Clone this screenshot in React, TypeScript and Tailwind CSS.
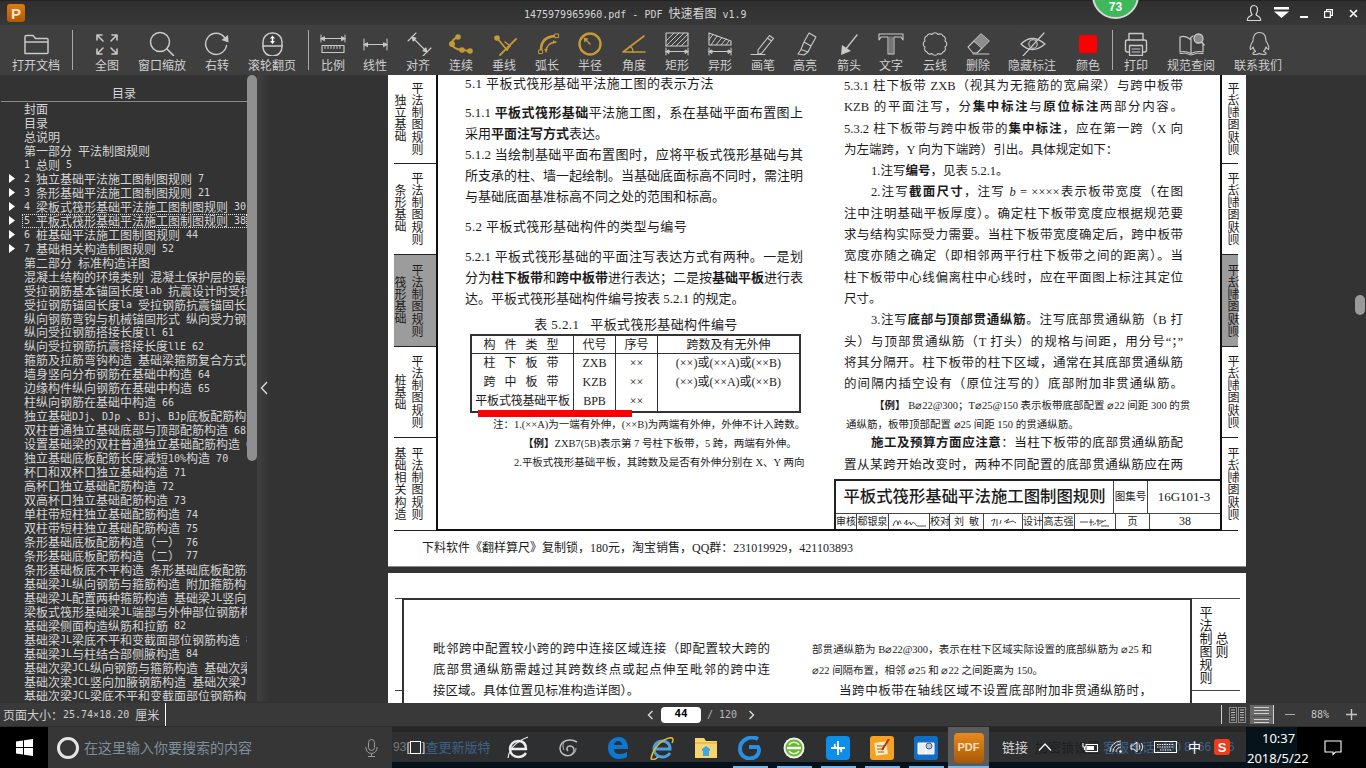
import React from "react";

const Mono = "[font-family:'DejaVu_Sans_Mono',monospace] text-[10px]";

function T({ s }: { s: string }) {
  const parts = s.split(/([\x20-\x7e×]+)/);
  return (
    <>
      {parts.map((p, i) =>
        p === "" ? null : /^[\x20-\x7e×]+$/.test(p) ? (
          <span key={i} className={`${Mono} whitespace-pre`}>{p}</span>
        ) : (
          <span key={i}>{p}</span>
        )
      )}
    </>
  );
}

const G = "#c9c9c9";
const Y = "#c49a36";

const S = ({ children }: { children: React.ReactNode }) => (
  <svg width="32" height="26" viewBox="0 0 32 26" fill="none" stroke={G} strokeWidth="1.4" strokeLinecap="round" strokeLinejoin="round">
    {children}
  </svg>
);
const Gold = ({ children }: { children: React.ReactNode }) => (
  <svg width="32" height="26" viewBox="0 0 32 26" fill="none" stroke={Y} strokeWidth="2" strokeLinecap="round" strokeLinejoin="round">
    {children}
  </svg>
);
const Dim = () => (
  <g strokeWidth="1">
    <path d="M5 18V25M27 18V25M5 21.5H27" />
    <path d="M5 21.5l3-1.6v3.2zM27 21.5l-3-1.6v3.2z" fill={G} />
  </g>
);

const tools: { label: string; w: string; icon: React.ReactNode; ml?: string }[] = [
  { label: "打开文档", w: "w-[72px]", icon: <S><path d="M5 23.5V7a1.5 1.5 0 0 1 1.5-1.5H13l2.5 3H27a1 1 0 0 1 1 1V22.5a1 1 0 0 1-1 1ZM5 12H28" strokeWidth="1.5" /></S> },
];
const group1: typeof tools = [
  { label: "全图", w: "w-[68px]", icon: <S><g strokeWidth="1.6"><path d="M6 5l6 6M6 5h5M6 5v5M26 5l-6 6M26 5h-5M26 5v5M6 24l6-6M6 24h5M6 24v-5M26 24l-6-6M26 24h-5M26 24v-5" /></g></S> },
  { label: "窗口缩放", w: "w-[42px]", icon: <S><circle cx="14" cy="12" r="9.5" strokeWidth="1.5" /><path d="M21 19l6.5 6.5" strokeWidth="1.6" /></S> },
  { label: "右转", w: "w-[68px]", icon: <S><path d="M23.5 7.5A10.5 10.5 0 1 0 25.5 15.5" strokeWidth="1.5" /><path d="M27 5l.5 7.5-7-2.5z" fill={G} stroke="none" /></S> },
  { label: "滚轮翻页", w: "w-[42px]", icon: <S><rect x="7" y="3" width="19" height="23" rx="9" strokeWidth="1.5" /><path d="M7 16H26" strokeWidth="1.5" /><path d="M16.5 5.5l2.5 3h-5zM16.5 14l2.5-3h-5z" fill="#fff" stroke="none" /><path d="M16.5 8v3.5" stroke="#fff" /></S> },
];
const group2: typeof tools = [
  { label: "比例", w: "w-[48px]", icon: <S><g strokeWidth="1"><path d="M4 5V12M28 5V12M4 8.5H28" /><path d="M4 8.5l3.5-1.8v3.6zM28 8.5l-3.5-1.8v3.6z" fill={G} /></g><rect x="5" y="15.5" width="22" height="7" strokeWidth="1.2" /><path d="M8 15.5v3M11 15.5v3M14 15.5v3M17 15.5v3M20 15.5v3M23 15.5v3" strokeWidth="1" /></S> },
  { label: "线性", w: "w-[36px]", icon: <S><g strokeWidth="1"><path d="M5 9V20M28 9V20M5 14.5H28" /><path d="M5 14.5l3.5-1.8v3.6zM28 14.5l-3.5-1.8v3.6z" fill={G} /></g></S> },
  { label: "对齐", w: "w-[50px]", icon: <S><g strokeWidth="1.1"><path d="M6 11L14 3M21 26L29 18M10 7L25 22" /><path d="M10 7l4 1.2-2.8 2.8zM25 22l-4-1.2 2.8-2.8z" fill={G} /></g></S> },
  { label: "连续", w: "w-[36px]", icon: <Gold><path d="M13 7Q6 10 7 14Q8 19 17 20L25 21" strokeWidth="2" /><circle cx="13" cy="7" r="2.8" fill={Y} stroke="none" /><circle cx="7" cy="14" r="3" fill={Y} stroke="none" /><circle cx="17" cy="20" r="2.8" fill={Y} stroke="none" /><circle cx="25" cy="21" r="2.8" fill={Y} stroke="none" /></Gold> },
  { label: "垂线", w: "w-[50px]", icon: <Gold><path d="M9 8L19 20M28 9L12 25" strokeWidth="1.8" /><circle cx="9" cy="8" r="2.8" fill={Y} stroke="none" /><path d="M17 12l5 4" strokeWidth="1.4" /><path d="M22 16l-3 4" strokeWidth="1.4" /></Gold> },
  { label: "弧长", w: "w-[36px]", icon: <Gold><path d="M10 20Q10 7 24 6" strokeWidth="2.6" /><path d="M15 22Q15 13 25 12" strokeWidth="1.3" /><path d="M25 12l-3-2v4zM15 22l-2-3h4z" fill={Y} stroke="none" /><rect x="8" y="20" width="3.6" height="3.6" fill="#3f3f3f" strokeWidth="1" /><rect x="24" y="4" width="3.6" height="3.6" fill="#3f3f3f" strokeWidth="1" /></Gold> },
  { label: "半径", w: "w-[50px]", icon: <Gold><circle cx="16" cy="14" r="10.5" strokeWidth="2.4" /><path d="M16 14L11 9" strokeWidth="1.4" /><path d="M9.5 7.5l5 1-4 4z" fill={Y} stroke="none" /></Gold> },
  { label: "角度", w: "w-[38px]", icon: <Gold><path d="M5 22L26 6M5 22H27" strokeWidth="1.6" /><path d="M15 22Q15 18 12 16" strokeWidth="1.3" /></Gold> },
  { label: "矩形", w: "w-[48px]", icon: <S><rect x="5" y="3" width="22" height="13" strokeWidth="1.1" /><path d="M5 11L13 3M5 16L18 3M10 16L23 3M15 16L27 4M20 16L27 9" strokeWidth="1" /><Dim /></S> },
  { label: "异形", w: "w-[38px]", icon: <S><path d="M5 3V15H27V11Z" strokeWidth="1.1" /><path d="M5 10L9 4.5M7 15L13 6M12 15L18 7.5M17 15L22 9M22 15L25 11" strokeWidth="1" /><Dim /></S> },
  { label: "画笔", w: "w-[48px]", icon: <S><path d="M22.5 5.5L26.5 8.5L15 23L11 24.5V20ZM20.5 8L24.5 11" strokeWidth="1.1" /><path d="M4 24.5H18" strokeWidth="1.1" /></S> },
  { label: "高亮", w: "w-[36px]", icon: <S><g strokeWidth="1.1"><path d="M20 3L27 7L22 16L15 12ZM15 12L22 16L19 22L12 19.5ZM12 19.5L19 22L15 25L9 24Z" /></g></S> },
  { label: "箭头", w: "w-[52px]", icon: <S><path d="M24 5L12 20" strokeWidth="1.3" /><path d="M8 25L9 15L18 21Z" fill={G} stroke="none" /></S> },
  { label: "文字", w: "w-[32px]", icon: <S><path d="M4 4H28V10L26 7H19V24H13V7H6L4 10Z" strokeWidth="1.1" /><path d="M15 7V24M17 7V24" strokeWidth="0.8" /></S> },
  { label: "云线", w: "w-[56px]", icon: <S><path d="M8 6A3.4 3.4 0 0 1 13 4.5A3.4 3.4 0 0 1 19 4.5A3.4 3.4 0 0 1 24 6A3.4 3.4 0 0 1 26 11A3.4 3.4 0 0 1 26 17A3.4 3.4 0 0 1 24 22A3.4 3.4 0 0 1 19 23.5A3.4 3.4 0 0 1 13 23.5A3.4 3.4 0 0 1 8 22A3.4 3.4 0 0 1 6 17A3.4 3.4 0 0 1 6 11A3.4 3.4 0 0 1 8 6Z" strokeWidth="1.1" /></S> },
  { label: "删除", w: "w-[30px]", icon: <S><path d="M6 17L19 4L27 11L15 23H11Z" strokeWidth="1.1" /><path d="M12 11L20 18" strokeWidth="1.1" /><path d="M19 4L27 11L20 18L12 11Z" fill="#8d8d8d" stroke="none" /><path d="M11 24H27" strokeWidth="1.1" /></S> },
  { label: "隐藏标注", w: "w-[78px]", icon: <S><path d="M5 14Q16 3 29 14Q16 25 5 14Z" strokeWidth="1.3" /><circle cx="17" cy="14" r="4.2" strokeWidth="1.1" /><path d="M7 26L28 3" strokeWidth="1.2" /></S> },
  { label: "颜色", w: "w-[34px]", icon: <div className="w-[18px] h-[18px] mb-[3px] rounded-[2px] bg-[#ff0000]" /> },
];
const group3: typeof tools = [
  { label: "打印", w: "w-[46px]", icon: <S><path d="M9 10V3.5H23V10" strokeWidth="1.4" /><rect x="5.5" y="10" width="21" height="12" rx="2" strokeWidth="1.4" /><path d="M9.5 15.5H22.5V25.5H9.5Z" fill="#3f3f3f" strokeWidth="1.3" /><path d="M12 19H20M12 22H20" strokeWidth="1" /></S> },
  { label: "规范查阅", w: "w-[64px]", icon: <S><path d="M15 9Q10 5 5 7V22Q10 20.5 16 23.5Q22 20.5 28 22V15" strokeWidth="1.2" /><path d="M16 9V23M15 9Q16 7 18 6" strokeWidth="1.2" /><circle cx="23.5" cy="8.5" r="4.5" strokeWidth="1.3" fill="#8a8a8a" /><path d="M26.5 12L29 15" strokeWidth="1.6" /><path d="M5 23.5Q10 22 16 25Q22 22 28 23.5" strokeWidth="1" /></S> },
  { label: "联系我们", w: "w-[70px]", icon: <S><path d="M17.5 2.5C12.5 2.5 11 6.5 11 11C9 14 7.5 17 8.5 19.5C9.5 19.5 10.5 18 11 17C11.5 19 12.5 20.5 13.5 21.5C11.5 22 10.5 23 11 24C12 25 15.5 24.5 17.5 23.5C19.5 24.5 23 25 24 24C24.5 23 23.5 22 21.5 21.5C22.5 20.5 23.5 19 24 17C24.5 18 25.5 19.5 26.5 19.5C27.5 17 26 14 24 11C24 6.5 22.5 2.5 17.5 2.5Z" strokeWidth="1.1" /></S> },
];

function Tool({ t }: { t: (typeof tools)[number] }) {
  return (
    <div className={`${t.w} shrink-0 h-full flex flex-col items-center justify-start`}>
      <div className="h-[26px] mt-[5px] flex items-end justify-center">{t.icon}</div>
      <div className="mt-[1px] text-[12px] leading-[16px] text-[#cfcfcf] whitespace-nowrap">{t.label}</div>
    </div>
  );
}
const Sep = () => <div className="w-px h-[40px] mt-[5px] bg-[#a8a8a8] shrink-0" />;

function TitleBar() {
  return (
    <div className="h-[25px] flex items-center bg-[linear-gradient(#2f2f2f,#383838)] relative shrink-0 border-t border-[#222]">
      <div className="ml-[7px] w-[18px] h-[18px] rounded-[3px] bg-[linear-gradient(#e07a12,#b05a08)] flex items-center justify-center text-[#f8e4c8] text-[15px] font-bold leading-none [font-family:'Liberation_Sans',sans-serif]">P</div>
      <div className="ml-[499px] text-[12px] text-[#d4d4d4] whitespace-nowrap"><T s="1475979965960.pdf - PDF 快速看图 v1.9" /></div>
      <div className="absolute left-[1092px] top-[-29px] w-[47px] h-[47px] rounded-full bg-[#3fb85c] border-2 border-[#d8d8d8] flex items-end justify-center pb-[3px] text-white text-[12px] font-bold leading-[14px] [font-family:'Liberation_Sans',sans-serif]">73</div>
      <div className="ml-auto flex items-center h-full">
        <svg width="16" height="18" viewBox="0 0 16 18" fill="none" stroke="#d8d8d8" strokeWidth="1.2" className="mr-[11px]">
          <path d="M8 1.5C5.5 1.5 4.5 3.5 4.5 6C4.5 8 5.5 9.5 6 10.5C5.5 12 2 12.5 1.5 15V16.5H14.5V15C14 12.5 10.5 12 10 10.5C10.5 9.5 11.5 8 11.5 6C11.5 3.5 10.5 1.5 8 1.5Z" />
        </svg>
        <svg width="17" height="12" viewBox="0 0 17 12" fill="#fff" className="mr-[10px]">
          <rect x="1" y="0" width="15" height="2.5" /><path d="M1 4.5H16L8.5 11Z" />
        </svg>
        <div className="w-[8px] h-[2px] bg-white mr-[16px] mt-[8px]" />
        <svg width="9" height="9" viewBox="0 0 9 9" fill="none" stroke="#fff" strokeWidth="1.2" className="mr-[16px]">
          <rect x="0.6" y="2.6" width="5.8" height="5.8" /><path d="M2.6 2.6V0.6H8.4V6.4H6.4" />
        </svg>
        <svg width="9" height="9" viewBox="0 0 9 9" stroke="#fff" strokeWidth="1.6" className="mr-[8px]">
          <path d="M1 1L8 8M8 1L1 8" />
        </svg>
      </div>
    </div>
  );
}

function Toolbar() {
  return (
    <div className="h-[50px] bg-[#3f3f3f] flex shrink-0">
      {tools.map((t) => <Tool key={t.label} t={t} />)}
      <Sep />
      {group1.map((t) => <Tool key={t.label} t={t} />)}
      <div className="w-[15px] shrink-0" />
      <Sep />
      {group2.map((t) => <Tool key={t.label} t={t} />)}
      <div className="w-[7px] shrink-0" />
      <Sep />
      {group3.map((t) => <Tool key={t.label} t={t} />)}
    </div>
  );
}

const toc: { s: string; a?: boolean; sel?: boolean }[] = [
  { s: "封面" }, { s: "目录" }, { s: "总说明" }, { s: "第一部分 平法制图规则" }, { s: "1 总则 5" },
  { s: "2 独立基础平法施工图制图规则 7", a: true },
  { s: "3 条形基础平法施工图制图规则 21", a: true },
  { s: "4 梁板式筏形基础平法施工图制图规则 30", a: true },
  { s: "5 平板式筏形基础平法施工图制图规则 38", a: true, sel: true },
  { s: "6 桩基础平法施工图制图规则 44", a: true },
  { s: "7 基础相关构造制图规则 52", a: true },
  { s: "第二部分 标准构造详图" },
  { s: "混凝土结构的环境类别 混凝土保护层的最小厚度 54" },
  { s: "受拉钢筋基本锚固长度lab 抗震设计时受拉钢筋基本锚固长度" },
  { s: "受拉钢筋锚固长度la 受拉钢筋抗震锚固长度 59" },
  { s: "纵向钢筋弯钩与机械锚固形式 纵向受力钢筋搭接" },
  { s: "纵向受拉钢筋搭接长度ll 61" },
  { s: "纵向受拉钢筋抗震搭接长度llE 62" },
  { s: "箍筋及拉筋弯钩构造 基础梁箍筋复合方式 63" },
  { s: "墙身竖向分布钢筋在基础中构造 64" },
  { s: "边缘构件纵向钢筋在基础中构造 65" },
  { s: "柱纵向钢筋在基础中构造 66" },
  { s: "独立基础DJj、DJp 、BJj、BJp底板配筋构造 67" },
  { s: "双柱普通独立基础底部与顶部配筋构造 68" },
  { s: "设置基础梁的双柱普通独立基础配筋构造 69" },
  { s: "独立基础底板配筋长度减短10%构造 70" },
  { s: "杯口和双杯口独立基础构造 71" },
  { s: "高杯口独立基础配筋构造 72" },
  { s: "双高杯口独立基础配筋构造 73" },
  { s: "单柱带短柱独立基础配筋构造 74" },
  { s: "双柱带短柱独立基础配筋构造 75" },
  { s: "条形基础底板配筋构造（一） 76" },
  { s: "条形基础底板配筋构造（二） 77" },
  { s: "条形基础板底不平构造 条形基础底板配筋构造" },
  { s: "基础梁JL纵向钢筋与箍筋构造 附加箍筋构造" },
  { s: "基础梁JL配置两种箍筋构造 基础梁JL竖向加腋" },
  { s: "梁板式筏形基础梁JL端部与外伸部位钢筋构造" },
  { s: "基础梁侧面构造纵筋和拉筋 82" },
  { s: "基础梁JL梁底不平和变截面部位钢筋构造 83" },
  { s: "基础梁JL与柱结合部侧腋构造 84" },
  { s: "基础次梁JCL纵向钢筋与箍筋构造 基础次梁" },
  { s: "基础次梁JCL竖向加腋钢筋构造 基础次梁JCL" },
  { s: "基础次梁JCL梁底不平和变截面部位钢筋构造" },
];

function Sidebar() {
  return (
    <div className="w-[247px] shrink-0 flex flex-col pb-[2px] overflow-hidden text-[12px] text-[#d6d6d6]">
      <div className="h-[27px] ml-[1px] shrink-0 border-b border-[#8a8a8a] flex items-end justify-center leading-[16px]">目录</div>
      <div className="flex-1 overflow-hidden">
        {toc.map((r, i) => (
          <div key={i} className="h-[13.97px] flex items-center whitespace-nowrap">
            <div className="w-[22px] shrink-0 pl-[9px] flex items-center">
              {r.a && (
                <svg width="6" height="9" viewBox="0 0 6 9" fill="#fff"><path d="M0 0L6 4.5L0 9Z" /></svg>
              )}
            </div>
            <div className={r.sel ? "flex-1 h-[13.97px] pl-[1px] flex items-center overflow-hidden border border-dotted border-[#e0e0e0]" : "flex-1 pl-[2px] flex items-center overflow-hidden"}>
              <T s={r.s} />
            </div>
          </div>
        ))}
      </div>
    </div>
  );
}

const Just = "[text-align:justify] [text-align-last:justify] whitespace-nowrap";

function V({ s }: { s: string }) {
  return <div className="[writing-mode:vertical-rl] tracking-[0.3px] text-[12px] leading-[12px] whitespace-nowrap">{s}</div>;
}

const leftTabs = [
  { h: "h-[89px]", l: "独立基础", bg: "" },
  { h: "h-[91px]", l: "条形基础", bg: "" },
  { h: "h-[92px]", l: "筏形基础", bg: "bg-[#9c9c9c]" },
  { h: "h-[91px]", l: "桩基础", bg: "" },
  { h: "h-[93px]", l: "基础相关构造", bg: "" },
];

function LeftTabs() {
  return (
    <div className="w-[42px] ml-[6px] flex flex-col shrink-0">
      {leftTabs.map((t) => (
        <div key={t.l} className={`${t.h} ${t.bg} border-b border-[#222] flex items-center justify-center gap-[5px] pr-[15px]`}>
          <V s={t.l} />
          <V s="平法制图规则" />
        </div>
      ))}
    </div>
  );
}

function RightTabs() {
  return (
    <div className="w-[24px] flex flex-col shrink-0">
      {[
        "h-[89px]",
        "h-[91px]",
        "h-[92px] bg-[#9c9c9c]",
        "h-[91px]",
        "h-[93px]",
      ].map((h, i) => (
        <div key={i} className={`${h} w-[16px] border-b border-[#222] flex items-center pl-[7px]`}>
          <div className="-scale-x-100"><V s="平法制图规则" /></div>
        </div>
      ))}
    </div>
  );
}

const leftCol = (
  <div className="w-[396px] shrink-0 pl-[27px] pr-[31px] text-[13px] leading-[21px] flex flex-col">
    <div className="h-[18px] leading-[18px] whitespace-nowrap tracking-[0.4px]">5.1 平板式筏形基础平法施工图的表示方法</div>
    <div className={`mt-[9px] ${Just}`}>5.1.1 <b className="font-bold">平板式筏形基础</b>平法施工图，系在基础平面布置图上</div>
    <div>采用<b className="font-bold">平面注写方式</b>表达。</div>
    <div className={Just}>5.1.2 当绘制基础平面布置图时，应将平板式筏形基础与其</div>
    <div className={Just}>所支承的柱、墙一起绘制。当基础底面标高不同时，需注明</div>
    <div>与基础底面基准标高不同之处的范围和标高。</div>
    <div className="mt-[9px] whitespace-nowrap tracking-[0.4px]">5.2 平板式筏形基础构件的类型与编号</div>
    <div className={`mt-[9px] ${Just}`}>5.2.1 平板式筏形基础的平面注写表达方式有两种。一是划</div>
    <div className={Just}>分为<b className="font-bold">柱下板带</b>和<b className="font-bold">跨中板带</b>进行表达；二是按<b className="font-bold">基础平板</b>进行表</div>
    <div className="whitespace-nowrap">达。平板式筏形基础构件编号按表 5.2.1 的规定。</div>
    <div className="mt-[6px] h-[19px] leading-[19px] text-[13px] tracking-[0.4px] text-center pl-[4px] whitespace-pre">表 5.2.1   平板式筏形基础构件编号</div>
    <div className="ml-[5px] w-[331px] border-2 border-[#333] text-[12px] text-center relative">
      <div className="grid grid-cols-[102px_42px_42px_1fr] grid-rows-[18px_19px_19px_19px] leading-[19px]">
        <div className="border-b border-r border-[#333] tracking-[3px] whitespace-pre">构 件 类 型</div>
        <div className="border-b border-r border-[#333]">代号</div>
        <div className="border-b border-r border-[#333]">序号</div>
        <div className="border-b border-[#333]">跨数及有无外伸</div>
        <div className="border-r border-[#333] tracking-[3px] whitespace-pre">柱 下 板 带</div>
        <div className="border-r border-[#333]">ZXB</div>
        <div className="border-r border-[#333]">××</div>
        <div className="whitespace-nowrap">(××)或(××A)或(××B)</div>
        <div className="border-r border-[#333] tracking-[3px] whitespace-pre">跨 中 板 带</div>
        <div className="border-r border-[#333]">KZB</div>
        <div className="border-r border-[#333]">××</div>
        <div className="whitespace-nowrap">(××)或(××A)或(××B)</div>
        <div className="border-r border-[#333] whitespace-nowrap tracking-[-0.2px]">平板式筏基础平板</div>
        <div className="border-r border-[#333]">BPB</div>
        <div className="border-r border-[#333]">××</div>
        <div />
      </div>
      <div className="absolute left-[6px] top-[74px] w-[154px] h-[7px] bg-[#ff0000]" />
    </div>
    <div className="text-[10.5px] leading-[19px] mt-[2px]">
      <div className={`ml-[28px] w-[306px] ${Just}`}>注：1.(××A)为一端有外伸，(××B)为两端有外伸，外伸不计入跨数。</div>
      <div className={`ml-[58px] w-[262px] ${Just}`}><b className="font-bold">【例】</b>ZXB7(5B)表示第 7 号柱下板带，5 跨，两端有外伸。</div>
      <div className={`ml-[49px] w-[289px] ${Just}`}>2.平板式筏形基础平板，其跨数及是否有外伸分别在 X、Y 两向</div>
    </div>
  </div>
);

const rightCol = (
  <div className="w-[386px] min-w-0 shrink-0 flex flex-col">
    <div className="pl-[10px] pr-[37px] pt-[1px] text-[12.5px] leading-[21.3px]">
      <div className={Just}>5.3.1 柱下板带 ZXB（视其为无箍筋的宽扁梁）与跨中板带</div>
      <div className={Just}>KZB 的平面注写，分<b className="font-bold">集中标注</b>与<b className="font-bold">原位标注</b>两部分内容。</div>
      <div className={Just}>5.3.2 柱下板带与跨中板带的<b className="font-bold">集中标注</b>，应在第一跨（X 向</div>
      <div className="whitespace-nowrap">为左端跨，Y 向为下端跨）引出。具体规定如下：</div>
      <div className="pl-[27px] whitespace-nowrap">1.注写<b className="font-bold">编号</b>，见表 5.2.1。</div>
      <div className={`pl-[27px] ${Just}`}>2.注写<b className="font-bold">截面尺寸</b>，注写 <i>b</i> = ××××表示板带宽度（在图</div>
      <div className={Just}>注中注明基础平板厚度）。确定柱下板带宽度应根据规范要</div>
      <div className={Just}>求与结构实际受力需要。当柱下板带宽度确定后，跨中板带</div>
      <div className={Just}>宽度亦随之确定（即相邻两平行柱下板带之间的距离）。当</div>
      <div className={Just}>柱下板带中心线偏离柱中心线时，应在平面图上标注其定位</div>
      <div>尺寸。</div>
      <div className={`pl-[27px] ${Just}`}>3.注写<b className="font-bold">底部与顶部贯通纵筋</b>。注写底部贯通纵筋（B 打</div>
      <div className={Just}>头）与顶部贯通纵筋（T 打头）的规格与间距，用分号“；”</div>
      <div className={Just}>将其分隔开。柱下板带的柱下区域，通常在其底部贯通纵筋</div>
      <div className={Just}>的间隔内插空设有（原位注写的）底部附加非贯通纵筋。</div>
      <div className="text-[10.5px] leading-[19px] mt-[1px]">
        <div className={`pl-[30px] pr-[2px] ${Just}`}><b className="font-bold">【例】</b> B⌀22@300；T⌀25@150 表示板带底部配置 ⌀22 间距 300 的贯</div>
        <div className="pl-[2px] whitespace-nowrap">通纵筋，板带顶部配置 ⌀25 间距 150 的贯通纵筋。</div>
      </div>
      <div className={`pl-[27px] mt-[-1px] ${Just}`}><b className="font-bold">施工及预算方面应注意</b>：当柱下板带的底部贯通纵筋配</div>
      <div className={Just}>置从某跨开始改变时，两种不同配置的底部贯通纵筋应在两</div>
    </div>
    <div className="mt-auto h-[50px] border-l-2 border-t-2 border-[#222] flex-col flex">
      <div className="flex h-[32px]">
        <div className="w-[278px] text-[16.4px] leading-[32px] font-medium text-center whitespace-nowrap border-r border-[#444]">平板式筏形基础平法施工图制图规则</div>
        <div className="w-[34px] text-[10.5px] leading-[32px] text-center border-r border-[#444]">图集号</div>
        <div className="flex-1 text-[13px] leading-[32px] text-center">16G101-3</div>
      </div>
      <div className="flex flex-1 border-t border-[#444] text-[10px] leading-[15px] whitespace-nowrap text-center">
        <div className="w-[21px] border-r border-[#444]">审核</div>
        <div className="w-[32px] border-r border-[#444]">郗银泉</div>
        <div className="w-[41px] border-r border-[#444] flex items-center justify-center">
          <svg width="36" height="12" viewBox="0 0 36 12" fill="none" stroke="#222" strokeWidth="0.8"><path d="M2 10C4 4 6 2 7 9C8 4 9 3 10 8M13 8L16 4L15 9L19 6L20 9C23 3 24 9 26 10H35" /></svg>
        </div>
        <div className="w-[20px] border-r border-[#444]">校对</div>
        <div className="w-[34px] border-r border-[#444] whitespace-pre">刘  敏</div>
        <div className="w-[39px] border-r border-[#444] flex items-center justify-center">
          <svg width="28" height="12" viewBox="0 0 28 12" fill="none" stroke="#222" strokeWidth="0.8"><path d="M2 5L6 3L4 10M8 3V10M12 4L11 8M15 6L20 3L17 7L24 5L27 7" /></svg>
        </div>
        <div className="w-[20px] border-r border-[#444]">设计</div>
        <div className="w-[32px] border-r border-[#444]">高志强</div>
        <div className="w-[41px] border-r border-[#444] flex items-center justify-center">
          <svg width="32" height="12" viewBox="0 0 32 12" fill="none" stroke="#222" strokeWidth="0.8"><path d="M1 6H9M12 3V10M10 6H15M14 9L17 7M19 3V10M17 5H24M20 8L27 4M22 10H30" /></svg>
        </div>
        <div className="w-[34px] border-r border-[#444]">页</div>
        <div className="flex-1 text-[12px]">38</div>
      </div>
    </div>
  </div>
);

function Page1() {
  return (
    <div className="h-[492px] shrink-0 bg-white border-b border-[#8c8c8c] flex flex-col overflow-hidden">
      <div className="h-[456px] flex shrink-0">
        <LeftTabs />
        <div className="w-[786px] shrink-0 border-l-2 border-r-2 border-b-2 border-[#111] flex">
          {leftCol}
          {rightCol}
        </div>
        <RightTabs />
      </div>
      <div className="flex-1 pl-[34px] flex items-start pt-[9px]">
        <div className={`w-[416px] text-[12px] leading-[16px] ${Just}`}>下料软件《翻样算尺》复制锁，180元，淘宝销售，QQ群：231019929，421103893</div>
      </div>
    </div>
  );
}

function Page2() {
  return (
    <div className="flex-1 mt-[6px] bg-white pt-[25px] pl-[7px] flex overflow-hidden">
      <div className="w-[7px] h-[93px] border-t border-b border-[#444] shrink-0" />
      <div className="w-[790px] shrink-0 border-t-2 border-l-2 border-r-2 border-[#333] flex text-[12.5px] leading-[21px]">
        <div className="ml-[29px] w-[337px] pt-[39px] shrink-0">
          <div className={Just}>毗邻跨中配置较小跨的跨中连接区域连接（即配置较大跨的</div>
          <div className={Just}>底部贯通纵筋需越过其跨数终点或起点伸至毗邻的跨中连</div>
          <div className="whitespace-nowrap">接区域。具体位置见标准构造详图）。</div>
        </div>
        <div className="ml-[42px] w-[340px] pt-[39px] shrink-0">
          <div className={`text-[10.5px] ${Just}`}>部贯通纵筋为 B⌀22@300，表示在柱下区域实际设置的底部纵筋为 ⌀25 和</div>
          <div className="text-[10.5px] whitespace-nowrap">⌀22 间隔布置，相邻 ⌀25 和 ⌀22 之间距离为 150。</div>
          <div className={`pl-[27px] ${Just}`}>当跨中板带在轴线区域不设置底部附加非贯通纵筋时，</div>
        </div>
      </div>
      <div className="w-[48px] h-[93px] border-t border-b border-[#444] flex justify-center items-center gap-[3px] shrink-0 pr-[6px] text-[13px] leading-[13px]">
        <div className="[writing-mode:vertical-rl] whitespace-nowrap">平法制图规则</div>
        <div className="[writing-mode:vertical-rl] whitespace-nowrap">总则</div>
      </div>
    </div>
  );
}

function Main() {
  return (
    <div className="h-[628px] flex bg-[#333] shrink-0">
      <Sidebar />
      <div className="w-[10px] shrink-0">
        <div className="h-[386px] bg-[#8f8f8f] rounded-full" />
      </div>
      <div className="w-[13px] shrink-0 mb-[2px] bg-[linear-gradient(90deg,#404040,#333)] flex items-center justify-center">
        <svg width="8" height="14" viewBox="0 0 8 14" fill="none" stroke="#d8d8d8" strokeWidth="1.4"><path d="M7 1L1.5 7L7 13" /></svg>
      </div>
      <div className="w-[118px] shrink-0" />
      <div className="w-[858px] shrink-0 flex flex-col text-[#1c1c1c] [font-family:'Liberation_Serif','Noto_Sans_CJK_SC',serif] pb-0">
        <Page1 />
        <Page2 />
      </div>
      <div className="flex-1 flex justify-end pt-[220px] pr-[1px]">
        <div className="w-[10px] h-[20px] rounded-[5px] bg-[#9a9a9a]" />
      </div>
    </div>
  );
}

function StatusBar() {
  return (
    <div className="h-[24px] bg-[#393939] flex items-center shrink-0 text-[12px] text-[#cfcfcf] border-b border-[#2b2b2b]">
      <div className="w-[166px] pl-[3px] whitespace-nowrap shrink-0 border-r border-white h-full flex items-center"><T s="页面大小：25.74×18.20 厘米" /></div>
      <div className="ml-[478px] w-[12px] flex justify-center shrink-0">
        <svg width="7" height="10" viewBox="0 0 7 10" fill="none" stroke="#d8d8d8" strokeWidth="1.4"><path d="M5.5 1L1.5 5L5.5 9" /></svg>
      </div>
      <div className="ml-[5px] w-[40px] h-[16px] bg-white rounded-[4px] flex items-center justify-center text-black [font-family:'DejaVu_Sans_Mono',monospace] text-[11px] font-bold shrink-0">44</div>
      <div className={`ml-[6px] whitespace-pre text-[#b8b8b8] ${Mono} shrink-0`}>/ 120</div>
      <div className="ml-[8px] w-[12px] flex justify-center shrink-0">
        <svg width="7" height="10" viewBox="0 0 7 10" fill="none" stroke="#d8d8d8" strokeWidth="1.4"><path d="M1.5 1L5.5 5L1.5 9" /></svg>
      </div>
      <div className="ml-auto flex items-center h-full">
        <div className="w-px h-[19px] bg-[#cfcfcf]" />
        <svg width="17" height="16" viewBox="0 0 17 16" fill="none" stroke="#8a8a8a" strokeWidth="1" className="ml-[7px]">
          <rect x="0.5" y="0.5" width="7" height="15" /><rect x="9.5" y="0.5" width="7" height="15" />
          <path d="M2 3H6M2 5.5H6M2 8H6M2 10.5H6M2 13H6M11 3H15M11 5.5H15M11 8H15M11 10.5H15M11 13H15" stroke="#bcbcbc" />
        </svg>
        <div className="ml-[4px] w-[23px] h-[19px] bg-[#686868] flex flex-col gap-[2px] items-center justify-center">
          <div className="w-[15px] h-[1px] bg-[#cfcfcf]" /><div className="w-[15px] h-[1px] bg-[#cfcfcf]" /><div className="w-[15px] h-[1px] bg-[#cfcfcf]" />
          <div className="w-[21px] h-[1px] bg-[#4c4c4c]" />
          <div className="w-[15px] h-[1px] bg-[#cfcfcf]" /><div className="w-[15px] h-[1px] bg-[#cfcfcf]" />
        </div>
        <div className="w-px h-[19px] bg-[#cfcfcf]" />
        <div className="ml-[11px] w-[10px] h-[1.5px] bg-[#a8a8a8]" />
        <div className={`ml-[16px] ${Mono} text-[#c8c8c8]`}>88%</div>
        <svg width="11" height="11" viewBox="0 0 11 11" stroke="#c8c8c8" strokeWidth="1.4" className="ml-[17px] mr-[9px]"><path d="M5.5 0V11M0 5.5H11" /></svg>
      </div>
    </div>
  );
}

const Cell = ({ w, bar, children }: { w: string; bar?: boolean; children: React.ReactNode }) => (
  <div className={`${w} shrink-0 h-full flex items-center justify-center pt-[6px] pb-[6px] relative`}>
    {children}
    {bar && <div className="absolute bottom-0 left-[4.5px] right-[4.5px] h-[2px] bg-[#76b9ed]" />}
  </div>
);

function Taskbar() {
  const ghost = "[font-family:'Noto_Sans_CJK_SC',sans-serif]";
  return (
    <div className="h-[41px] flex shrink-0 bg-[linear-gradient(#262626_0,#262626_5px,#2e2f31_5px,#2e2f31_35px,#04111a_35px)] overflow-hidden">
      <div className="w-[48px] bg-black flex items-center justify-center shrink-0">
        <svg width="17" height="17" viewBox="0 0 17 17" fill="#fff"><path d="M0 2.4L7 1.4V8H0ZM8 1.3L17 0V8H8ZM0 9H7V15.6L0 14.6ZM8 9H17V17L8 15.7Z" /></svg>
      </div>
      <div className="w-[344px] bg-[#363636] flex items-center shrink-0 pl-[9px]">
        <div className="w-[22px] h-[22px] rounded-full border-[3px] border-[#e6e6e6]" />
        <div className={`ml-[5px] text-[14px] text-[#7d8f9c] whitespace-nowrap ${ghost}`}>在这里输入你要搜索的内容</div>
        <svg width="13" height="18" viewBox="0 0 13 18" fill="none" stroke="#9a9a9a" strokeWidth="1" className="ml-auto mr-[14px]">
          <rect x="3.5" y="0.5" width="6" height="11" rx="3" /><path d="M1 8V9A5.5 5.5 0 0 0 12 9V8M6.5 14.5V17.5M3 17.5H10" />
        </svg>
      </div>
      <div className="w-[104px] shrink-0 flex items-center pl-[1px] pb-[1px] text-[13px] text-[#3f6188] whitespace-nowrap overflow-visible">
        <span className="text-[#777] [font-family:'Liberation_Sans',sans-serif] text-[12px]">93</span>
        <span className="text-white text-[12px]">[</span>
        <span className="w-[11px] h-[13px] border border-white shrink-0" />
        <span className="text-white text-[12px]">]</span>
        <span className={ghost}>查更新版特</span>
      </div>
      <Cell w="w-[44px]">
        <svg width="22" height="24" viewBox="0 0 22 24" fill="none" stroke="#eee" strokeWidth="2.4"><path d="M4 13H19C19 7 15 5 11 5C6 5 3 9 3 13C3 18 7 21 11 21C14 21 17 20 19 17" /><path d="M1 22C2 14 8 6 21 1" strokeWidth="1.2" /></svg>
      </Cell>
      <Cell w="w-[56px]">
        <svg width="20" height="20" viewBox="0 0 20 20" fill="none" stroke="#bdbdbd" strokeWidth="1.5"><path d="M19 4C12 0 3 2 2 10C2 16 8 19 13 17C18 14 16 8 12 8C9 8 8 11 10 13" /><path d="M7 3C4 6 5 10 6 12M18 10C18 14 16 16 13 17" strokeWidth="1" /></svg>
      </Cell>
      <Cell w="w-[44px]">
        <svg width="22" height="22" viewBox="0 0 22 22" fill="#0b78d4"><path d="M1 11C1 4 6 0 12 0C18 0 21 5 21 12H7C7 16 10 17 13 17C16 17 18 16 20 15V20C18 21 15 22 12 22C5 22 1 17 1 11ZM7 8H15C15 5 13 4 11 4C9 4 7 6 7 8Z" /></svg>
      </Cell>
      <Cell w="w-[44px]">
        <svg width="24" height="24" viewBox="0 0 24 24" fill="none"><path d="M4 13H19C19 7 15 5 11 5C6 5 3 9 3 13C3 18 7 21 11 21C14 21 17 20 19 17" stroke="#4a9fe0" strokeWidth="3" transform="translate(1 0)" /><path d="M1 23C2 16 8 5 19 2C23 1 24 3 22 7" stroke="#e2b92c" strokeWidth="1.5" /><path d="M1 23C3 24 6 23 8 21" stroke="#e2b92c" strokeWidth="1.5" /></svg>
      </Cell>
      <Cell w="w-[44px]">
        <svg width="22" height="20" viewBox="0 0 22 20"><path d="M0 0H9L11 3H22V20H0Z" fill="#f6d570" /><path d="M0 4H22V6H0Z" fill="#e8c050" /><path d="M7 13H15V11L11 8L7 11Z M8 13H14V18H8Z" fill="#38a8e8" /></svg>
      </Cell>
      <Cell w="w-[44px]" bar>
        <svg width="24" height="24" viewBox="0 0 24 24" fill="none"><path d="M20 3C12 -1 2 4 2 13C2 20 9 24 15 22C21 20 22 14 20 11H11" stroke="#2a8fe0" strokeWidth="4" /></svg>
      </Cell>
      <Cell w="w-[44px]" bar>
        <svg width="22" height="22" viewBox="0 0 22 22"><circle cx="11" cy="11" r="10.5" fill="#f0f0f0" /><circle cx="11" cy="11" r="8.5" fill="#66b82c" /><path d="M4 11H18" stroke="#fff" strokeWidth="2.5" /><path d="M6 8A6 6 0 0 1 16 8M6 14A6 6 0 0 0 16 14" stroke="#e8f4d8" strokeWidth="1.6" fill="none" /></svg>
      </Cell>
      <Cell w="w-[44px]" bar>
        <div className="w-[24px] h-[24px] rounded-[4px] bg-[#0d8ee9] flex items-center justify-center">
          <svg width="16" height="16" viewBox="0 0 16 16" fill="none" stroke="#fff" strokeWidth="1.8"><path d="M8 1V15M1 8H15" /><path d="M8 8C5 8 4 6 5 4M8 8C11 8 12 10 11 12" /></svg>
        </div>
      </Cell>
      <Cell w="w-[44px]" bar>
        <div className="w-[24px] h-[24px] rounded-[3px] bg-[#f3a321] flex items-center justify-center">
          <svg width="18" height="18" viewBox="0 0 18 18" fill="none"><rect x="2" y="3" width="12" height="13" fill="#fde9c0" transform="rotate(-8 8 9)" /><path d="M4 7H11M4 10H11M5 13H11" stroke="#a45a10" strokeWidth="1" /><path d="M16 0L9 11" stroke="#b02a10" strokeWidth="1.8" /></svg>
        </div>
      </Cell>
      <Cell w="w-[44px]" bar>
        <div className="w-[24px] h-[24px] rounded-[3px] bg-[#0f6fc6] flex items-center justify-center">
          <svg width="18" height="16" viewBox="0 0 18 16" fill="none"><path d="M1 3H9V14H1ZM9 3H17V14H9Z" fill="#e8eef6" stroke="#fff" /><circle cx="12" cy="6" r="3" fill="#a8cce8" stroke="#555" /></svg>
        </div>
      </Cell>
      <div className="w-[41px] shrink-0 bg-[#5b5b5b] flex items-center justify-center relative">
        <div className="w-[30px] h-[30px] rounded-[4px] bg-[linear-gradient(#e88a1c,#a85808)] flex items-center justify-center text-[#fde0b8] text-[11px] font-bold [font-family:'Liberation_Sans',sans-serif]">PDF</div>
        <div className="absolute bottom-0 left-0 right-0 h-[2px] bg-[#76b9ed]" />
      </div>
      <div className="flex-1 relative flex items-center text-[13px] whitespace-nowrap pb-[1px]">
        <span className={`absolute left-[46px] text-[#1e1e1e] ${ghost}`}>加密锁设置</span>
        <span className={`absolute left-[114px] text-[#3f6188] ${ghost}`}>客服电话：</span>
        <span className="absolute left-[172px] text-[#3f6188] text-[12px] [font-family:'Liberation_Sans',sans-serif]">400 8366 716</span>
        <span className={`ml-[13px] text-[#d8d8d8] ${ghost}`}>链接</span>
        <svg width="14" height="8" viewBox="0 0 14 8" fill="none" stroke="#fff" strokeWidth="1.2" className="ml-[10px] relative"><path d="M1 7.5L7 1L13 7.5" /></svg>
        <svg width="16" height="11" viewBox="0 0 16 11" fill="none" stroke="#fff" strokeWidth="1.1" className="ml-[30px] relative"><rect x="4" y="2.5" width="11.5" height="7" /><rect x="5" y="4" width="7" height="4" fill="#fff" stroke="none" /><path d="M1 1V5H4M2.5 5V8" /></svg>
        <svg width="14" height="14" viewBox="0 0 14 14" fill="none" stroke="#dcdcdc" strokeWidth="1" className="ml-[11px] relative"><path d="M1 12A11 11 0 0 1 12 1M4 12A8 8 0 0 1 12 4M7 12A5 5 0 0 1 12 7" /><circle cx="11.5" cy="11.5" r="1.3" fill="#fff" stroke="none" /></svg>
        <svg width="15" height="14" viewBox="0 0 15 14" fill="none" stroke="#f0f0f0" strokeWidth="1" className="ml-[7px] relative"><path d="M1 5V9H3.5L7 12V2L3.5 5Z" /><path d="M9 4.5Q11 7 9 9.5M11.5 3Q14 7 11.5 11" /></svg>
        <svg width="23" height="12" viewBox="0 0 23 12" fill="none" stroke="#fff" strokeWidth="1" className="ml-[9px] relative"><rect x="0.5" y="0.5" width="22" height="11" /><path d="M3 3.5H20M3 6H20M6 9H17" strokeDasharray="1.4 1" /></svg>
        <span className={`ml-[11px] text-white relative ${ghost}`}>中</span>
        <div className="ml-[13px] w-[16px] h-[16px] rounded-[3px] bg-[#ef3b1c] flex items-center justify-center text-white text-[13px] font-bold leading-none relative [font-family:'Liberation_Sans',sans-serif]">S</div>
      </div>
      <div className="w-[51px] shrink-0 bg-[#06131b] relative z-10 flex flex-col justify-center text-white text-[13px] leading-[20px] whitespace-nowrap [font-family:'Noto_Sans',sans-serif]">
        <div className="pl-[16px]">10:37</div>
        <div className="pl-[1px]">2018/5/22</div>
      </div>
      <div className="w-[69px] shrink-0 bg-black flex items-center justify-center pl-[3px]">
        <svg width="18" height="16" viewBox="0 0 18 16" fill="none" stroke="#fff" strokeWidth="1.1"><path d="M1 1H17V12H11.5L9 14.5V12H1Z" /></svg>
      </div>
    </div>
  );
}

export default function App() {
  return (
    <div className="w-[1366px] h-[768px] overflow-hidden flex flex-col bg-[#333] [font-family:'Noto_Sans_CJK_SC',sans-serif]">
      <TitleBar />
      <Toolbar />
      <Main />
      <StatusBar />
      <Taskbar />
    </div>
  );
}
